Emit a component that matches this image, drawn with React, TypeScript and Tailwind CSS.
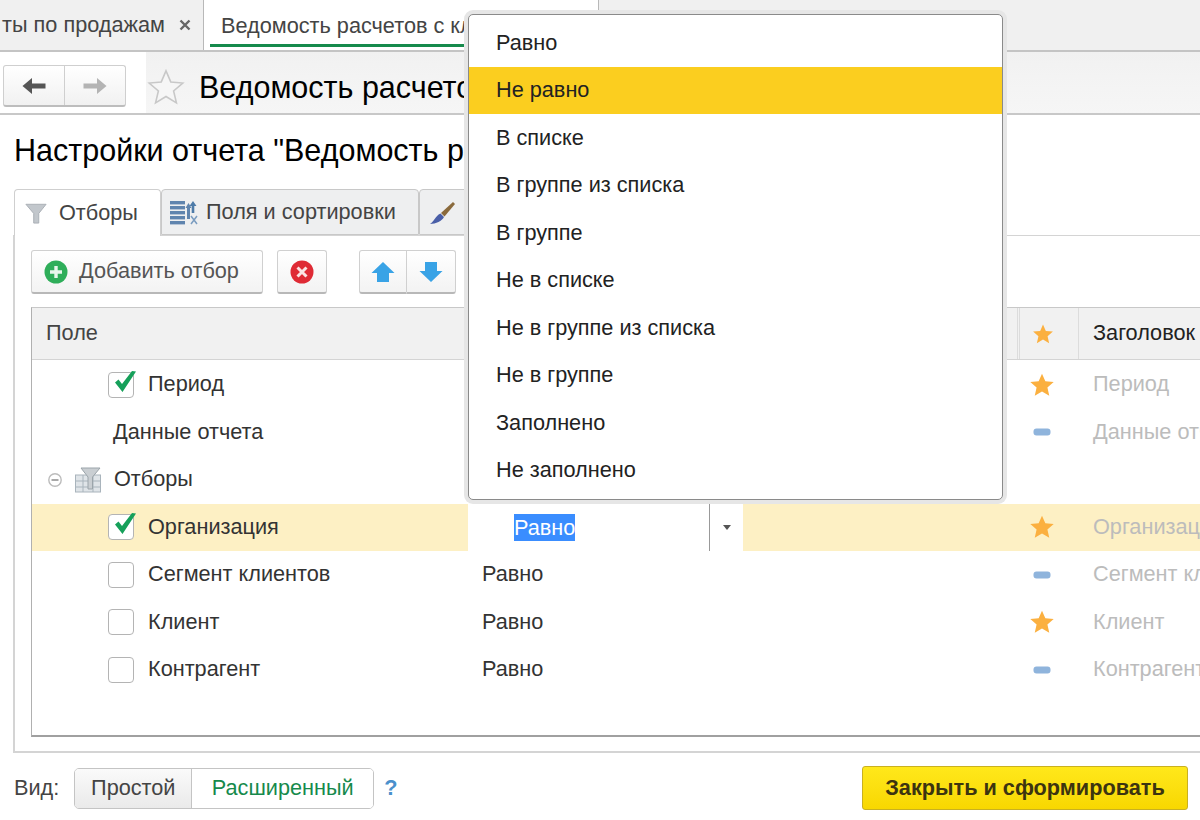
import React from "react";

const Check = () => (
  <svg width="28" height="28" viewBox="0 0 28 28" className="absolute left-[2px] -top-[5px]">
    <path d="M4 14.5 L7.5 11.5 L11 16 L21 3 L25 3.5 L11.5 24 Z" fill="#16a05a" />
  </svg>
);
const Box = ({ checked }: { checked?: boolean }) => (
  <div className="relative w-[26px] h-[26px] bg-white border border-[#b4b4b4] rounded-[4px] shrink-0">
    {checked && <Check />}
  </div>
);
const Star = ({ size = 26 }: { size?: number }) => (
  <svg width={size} height={size} viewBox="0 0 24 24">
    <path d="M12 1.5 L15.1 8.6 L22.8 9.3 L17 14.4 L18.7 22 L12 18 L5.3 22 L7 14.4 L1.2 9.3 L8.9 8.6 Z" fill="#fbb040" />
  </svg>
);
const Dash = () => (
  <svg width="18" height="8" viewBox="0 0 18 8">
    <rect x="0.5" y="0.5" width="17" height="7" rx="3" fill="#8fb4dc" />
  </svg>
);

const rows = [
  { name: "Период", check: true, cond: "", star: true, title: "Период" },
  { name: "Данные отчета", plain: true, cond: "", star: false, title: "Данные отчета" },
  { name: "Отборы", group: true, cond: "" },
  { name: "Организация", check: true, active: true, star: true, title: "Организация" },
  { name: "Сегмент клиентов", box: true, cond: "Равно", star: false, title: "Сегмент клиентов" },
  { name: "Клиент", box: true, cond: "Равно", star: true, title: "Клиент" },
  { name: "Контрагент", box: true, cond: "Равно", star: false, title: "Контрагент" },
];

const menu = ["Равно", "Не равно", "В списке", "В группе из списка", "В группе", "Не в списке", "Не в группе из списка", "Не в группе", "Заполнено", "Не заполнено"];

const Btn = "h-[44px] bg-gradient-to-b from-white to-[#f3f3f3] border border-[#d0d0d0] border-b-2 border-b-[#b8b8b8] rounded-[3px] flex items-center justify-center";

export default function App() {
  return (
    <div className="relative w-[1200px] h-[820px] overflow-hidden bg-white font-['Liberation_Sans',Arial,sans-serif] text-[21.7px] text-[#333]">
      {/* top tabs */}
      <div className="h-[52px] bg-[#f0f0f0] border-b-2 border-[#c4c4c4] flex">
        <div className="w-[204px] border-r border-[#b8b8b8] flex items-center justify-end pr-[12px] whitespace-nowrap overflow-hidden">
          <span className="text-[#444]">ты по продажам</span>
          <svg width="12" height="12" viewBox="0 0 12 12" className="ml-[14px]"><path d="M1.5 1.5 L10.5 10.5 M10.5 1.5 L1.5 10.5" stroke="#666" strokeWidth="2.4" /></svg>
        </div>
        <div className="w-[395px] bg-white border-r border-[#b8b8b8] pl-[6px] pr-[6px]">
          <div className="h-[47px] border-b-[3px] border-[#168a4c] pl-[11px] pt-[10px] whitespace-nowrap overflow-hidden text-[#444]">Ведомость расчетов с клиентами</div>
        </div>
      </div>

      {/* toolbar */}
      <div className="h-[63px] border-b-2 border-[#c8c8c8] flex">
        <div className="w-[146px] shrink-0 pl-[3px] pt-[13px]">
          <div className="w-[123px] h-[42px] flex bg-gradient-to-b from-white to-[#f1f1f1] border border-[#cfcfcf] border-b-2 border-b-[#bdbdbd] rounded-[3px]">
            <div className="w-[61px] border-r border-[#cfcfcf] flex items-center justify-center">
              <svg width="24" height="18" viewBox="0 0 24 18"><path d="M0.5 9 L10 1 V6.5 H23.5 V11.5 H10 V17 Z" fill="#555" /></svg>
            </div>
            <div className="flex-1 flex items-center justify-center">
              <svg width="24" height="18" viewBox="0 0 24 18"><path d="M23.5 9 L14 1 V6.5 H0.5 V11.5 H14 V17 Z" fill="#b4b4b4" /></svg>
            </div>
          </div>
        </div>
        <div className="flex-1 flex items-center pt-[8px] bg-gradient-to-b from-[#f1f1f1] to-[#f6f6f6]">
          <svg width="38" height="38" viewBox="0 0 24 24" className="ml-[1px]">
            <path d="M12 1.8 L15 8.8 L22.6 9.5 L16.8 14.5 L18.6 22 L12 18 L5.4 22 L7.2 14.5 L1.4 9.5 L9 8.8 Z" fill="#f6f6f6" stroke="#c8c8c8" strokeWidth="1" />
          </svg>
          <div className="ml-[14px] mt-[2px] text-[30.5px] text-black whitespace-nowrap">Ведомость расчетов с клиентами</div>
        </div>
      </div>

      {/* title */}
      <div className="h-[74px] pl-[14px] pt-[13px] text-[30.5px] text-black whitespace-nowrap">Настройки отчета "Ведомость расчетов с клиентами"</div>

      {/* inner tabs */}
      <div className="relative z-10 flex h-[47px] pl-[14px] -mb-px">
        <div className="w-[147px] h-[47px] bg-white border border-b-0 border-[#cfcfcf] rounded-t-[4px] flex items-center pl-[10px]">
          <svg width="22" height="22" viewBox="0 0 24 24"><path d="M1 2.5 H23 L15 12.5 V23 H9.5 V12.5 Z" fill="#c2c7cc" stroke="#a7adb3" strokeWidth="1" /></svg>
          <span className="ml-[12px] text-[#444]">Отборы</span>
        </div>
        <div className="w-[258px] h-[46px] bg-[#eeeff0] border border-[#c8c8c8] rounded-t-[4px] flex items-center pl-[8px]">
          <svg width="28" height="25" viewBox="0 0 28 25">
            <g fill="#5f84ae">
              <rect x="0" y="1" width="15" height="3.4" /><rect x="0" y="6" width="15" height="3.4" /><rect x="0" y="11" width="15" height="3.4" /><rect x="0" y="16" width="15" height="3.4" /><rect x="0" y="21" width="15" height="3.4" />
              <rect x="17" y="6" width="3" height="13" />
              <path d="M18.5 3 L21.5 8 H15.5 Z" />
            </g>
            <path d="M23 1 L26.5 6 H24.3 V13 H21.7 V6 H19.5 Z" fill="#4e7ba8" />
            <path d="M21 16 L27 24 M27 16 L21 24" stroke="#7a9cc0" strokeWidth="1.5" />
          </svg>
          <span className="ml-[8px] text-[#444]">Поля и сортировки</span>
        </div>
        <div className="w-[60px] h-[46px] bg-[#eeeff0] border border-[#c8c8c8] rounded-t-[4px] flex items-center pl-[9px]">
          <svg width="27" height="25" viewBox="0 0 27 25">
            <path d="M12 13 L24 2 L26 4 L15.5 16.5 Z" fill="#8a6a3c" />
            <path d="M11.5 13.5 L15 17 C13 21 7 24 1 24 C5 22 6 16 11.5 13.5 Z" fill="#4a5fa8" />
          </svg>
        </div>
      </div>

      {/* panel */}
      <div className="ml-[13px] h-[518px] border-l-2 border-t border-b-2 border-[#d4d4d4] pl-[16px] pt-[14px]">
        <div className="flex h-[44px]">
          <div className={`${Btn} w-[232px] !justify-start pl-[12px]`}>
            <svg width="24" height="24" viewBox="0 0 24 24">
              <circle cx="12" cy="12" r="11.5" fill="#2fae5a" />
              <path d="M12 6 V18 M6 12 H18" stroke="#e8f6ec" strokeWidth="3.4" />
            </svg>
            <span className="ml-[11px] text-[#555]">Добавить отбор</span>
          </div>
          <div className={`${Btn} w-[50px] ml-[14px]`}>
            <svg width="24" height="24" viewBox="0 0 24 24">
              <circle cx="12" cy="12" r="11.5" fill="#df2b35" />
              <path d="M7.5 7.5 L16.5 16.5 M16.5 7.5 L7.5 16.5" stroke="#fbe4e4" strokeWidth="3" />
            </svg>
          </div>
          <div className={`${Btn} w-[48px] ml-[32px] !rounded-r-none`}>
            <svg width="24" height="22" viewBox="0 0 24 22"><path d="M12 1 L23.5 12 H18 V21 H6 V12 H0.5 Z" fill="#39a3e6" /></svg>
          </div>
          <div className={`${Btn} w-[49px] !rounded-l-none border-l-0`}>
            <svg width="24" height="22" viewBox="0 0 24 22"><path d="M12 21 L23.5 10 H18 V1 H6 V10 H0.5 Z" fill="#39a3e6" /></svg>
          </div>
        </div>

        <div className="mt-[13px] h-[430px] border-l border-t border-b-2 border-l-[#b0b0b0] border-t-[#c8c8c8] border-b-[#a0a0a0]">
          {/* head */}
          <div className="h-[52px] bg-[#f1f1f1] border-b border-[#d4d4d4] flex items-center mb-px">
            <div className="w-[985px] pl-[14px] text-[#444]">Поле</div>
            <div className="w-[2px] h-full border-l border-[#dcdcdc]" />
            <div className="w-[60px] h-full border-l border-r border-[#dcdcdc] flex items-center pl-[12px]"><Star size={22} /></div>
            <div className="pl-[14px] text-[#222] whitespace-nowrap">Заголовок</div>
          </div>
          {/* rows */}
          {rows.map((r) => (
            <div key={r.name} className={`h-[47.5px] flex items-center whitespace-nowrap ${r.active ? "bg-[#fdf0c4]" : ""}`}>
              <div className="w-[436px] h-full shrink-0 flex items-center">
                {r.group ? (
                  <div className="flex items-center pl-[16px]">
                    <svg width="14" height="14" viewBox="0 0 14 14"><circle cx="7" cy="7" r="6.2" fill="none" stroke="#bcbcbc" strokeWidth="1.4" /><rect x="3.5" y="6" width="7" height="2" fill="#a8a8a8" /></svg>
                    <svg width="26" height="26" viewBox="0 0 26 26" className="ml-[13px]">
                      <rect x="0.5" y="8" width="25" height="17" fill="#dfe4e8" stroke="#a9b4bc" />
                      <path d="M8 8 V25 M18 8 V25 M1 14 H25 M1 20 H25" stroke="#a9b4bc" strokeWidth="1" />
                      <path d="M6 1 H25 L17.5 10 V22 H13 V10 Z" fill="#c9ced2" stroke="#9ba4aa" strokeWidth="1" />
                    </svg>
                    <span className="ml-[13px]">{r.name}</span>
                  </div>
                ) : r.plain ? (
                  <span className="pl-[81px]">{r.name}</span>
                ) : (
                  <div className="flex items-center pl-[76px]">
                    <Box checked={r.check} />
                    <span className="ml-[14px]">{r.name}</span>
                  </div>
                )}
              </div>
              {r.active ? (
                <div className="w-[275px] h-full bg-white flex items-center shrink-0">
                  <div className="w-[242px] h-full border-r border-[#999] pl-[46px] flex items-center">
                    <span className="bg-[#3a8dff] text-white leading-[27px]">Равно</span>
                  </div>
                  <div className="flex-1 flex justify-center"><div className="w-0 h-0 border-l-[4px] border-r-[4px] border-t-[5px] border-l-transparent border-r-transparent border-t-[#555]" /></div>
                </div>
              ) : (
                <div className="w-[275px] pl-[14px] shrink-0">{r.cond}</div>
              )}
              <div className="w-[275px] shrink-0" />
              <div className="w-[48px] flex justify-center shrink-0">
                {r.star === true && <Star />}
                {r.star === false && <Dash />}
              </div>
              <div className="pl-[27px] text-[#bcbcbc]">{r.title}</div>
            </div>
          ))}
        </div>
      </div>

      {/* bottom */}
      <div className="flex items-center h-[70px] pl-[14px] pr-[12px]">
        <span className="text-[#444]">Вид:</span>
        <div className="ml-[15px] w-[300px] h-[41px] flex border border-[#c4c4c4] rounded-[5px] overflow-hidden">
          <div className="w-[117px] bg-gradient-to-b from-[#fafafa] to-[#eaeaea] border-r border-[#c4c4c4] flex items-center justify-center text-[#444]">Простой</div>
          <div className="flex-1 bg-white flex items-center justify-center text-[#168a4c]">Расширенный</div>
        </div>
        <span className="ml-[10px] font-bold text-[#4a90cc]">?</span>
        <div className="ml-auto w-[326px] h-[44px] bg-gradient-to-b from-[#ffe81a] to-[#f8d700] border border-[#c9b020] rounded-[3px] flex items-center justify-center font-bold text-[#3c3410]">Закрыть и сформировать</div>
      </div>

      {/* popup */}
      <div className="absolute left-[468px] top-[14px] w-[535px] h-[486px] z-20 bg-white border border-[#8a8a8a] rounded-[5px] shadow-[0_0_0_4px_#e6e6e6] pt-[4px]">
        {menu.map((m, i) => (
          <div key={m} className={`h-[47.55px] pl-[27px] flex items-center text-[#222] ${i === 1 ? "bg-[#fbce1f]" : ""}`}>{m}</div>
        ))}
      </div>
    </div>
  );
}
